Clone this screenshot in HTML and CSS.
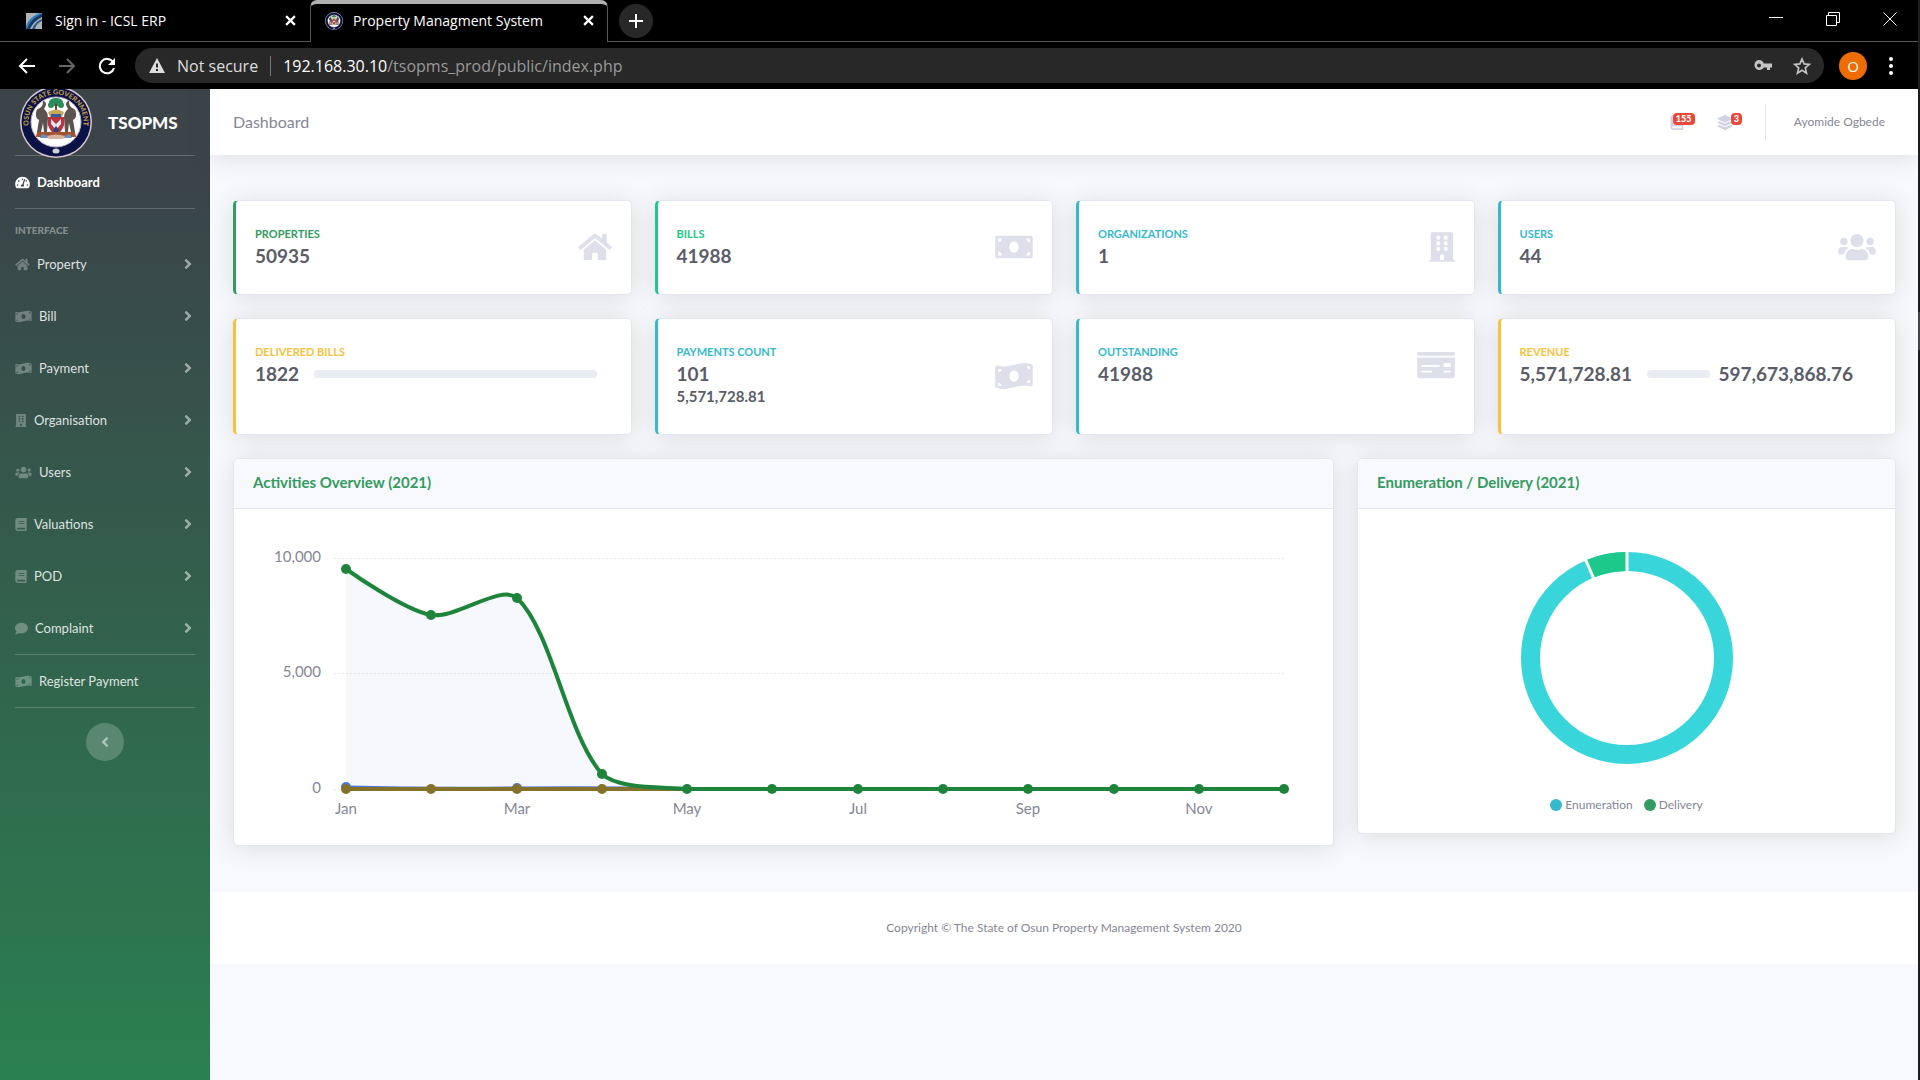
FILE: index.html
```html
<!DOCTYPE html>
<html lang="en">
<head>
  <meta charset="UTF-8">
  <meta name="viewport" content="width=device-width, initial-scale=1.0">
  <title>Property Managment System</title>
  <link rel="stylesheet" href="styles.css">
</head>
<body>
  <!-- Icon set -->
  <svg class="sprite" aria-hidden="true">
    <symbol id="i-home" viewBox="0 0 576 512"><path d="M280.37 148.26L96 300.11V464a16 16 0 0 0 16 16l112.06-.29a16 16 0 0 0 15.92-16V368a16 16 0 0 1 16-16h64a16 16 0 0 1 16 16v95.64a16 16 0 0 0 16 16.05L464 480a16 16 0 0 0 16-16V300L295.67 148.26a12.19 12.19 0 0 0-15.3 0zM571.6 251.47L488 182.56V44.05a12 12 0 0 0-12-12h-56a12 12 0 0 0-12 12v72.61L318.47 43a48 48 0 0 0-61 0L4.34 251.47a12 12 0 0 0-1.6 16.9l25.5 31A12 12 0 0 0 45.15 301l235.22-193.74a12.19 12.19 0 0 1 15.3 0L530.9 301a12 12 0 0 0 16.9-1.6l25.5-31a12 12 0 0 0-1.7-16.93z"/></symbol>
    <symbol id="i-bill" viewBox="0 0 640 512"><path d="M608 64H32C14.33 64 0 78.33 0 96v320c0 17.67 14.33 32 32 32h576c17.67 0 32-14.33 32-32V96c0-17.67-14.33-32-32-32zM48 400v-64c35.35 0 64 28.65 64 64H48zm0-224v-64h64c0 35.35-28.65 64-64 64zm272 176c-44.19 0-80-42.99-80-96 0-53.02 35.82-96 80-96s80 42.98 80 96c0 53.03-35.83 96-80 96zm272 48h-64c0-35.35 28.65-64 64-64v64zm0-224c-35.35 0-64-28.65-64-64h64v64z"/></symbol>
    <symbol id="i-wave" viewBox="0 0 640 512"><path d="M621.16 54.46C582.37 38.19 543.55 32 504.75 32c-123.17-.01-246.33 62.34-369.5 62.34-30.89 0-61.76-3.92-92.65-13.72-3.47-1.1-6.95-1.62-10.35-1.62C15.04 79 0 92.32 0 110.81v317.26c0 12.63 7.23 24.6 18.84 29.46C57.63 473.81 96.45 480 135.25 480c123.17 0 246.34-62.35 369.51-62.35 30.89 0 61.76 3.92 92.65 13.72 3.47 1.1 6.95 1.62 10.35 1.62 17.21 0 32.25-13.32 32.25-31.81V83.93c-.01-12.64-7.24-24.6-18.85-29.47zM48 132.22c20.12 5.04 41.12 7.57 62.72 8.93C104.84 170.54 79 192.69 48 192.69v-60.47zm0 285v-47.78c34.37 0 62.18 27.27 63.71 61.4-22.53-1.81-43.59-6.31-63.71-13.62zM320 352c-44.19 0-80-42.99-80-96 0-53.02 35.82-96 80-96s80 42.98 80 96c0 53.03-35.83 96-80 96zm272 27.78c-17.52-4.39-35.71-6.85-54.32-8.44 5.87-26.08 27.5-45.88 54.32-49.28v57.72zm0-236.11c-30.89-3.91-54.86-29.7-55.81-61.55 19.54 2.17 38.09 6.23 55.81 12.66v48.89z"/></symbol>
    <symbol id="i-building" viewBox="0 0 448 512"><path fill-rule="evenodd" d="M436 480h-20V24c0-13.26-10.74-24-24-24H56C42.75 0 32 10.75 32 24v456H12c-6.63 0-12 5.37-12 12v20h448v-20c0-6.63-5.37-12-12-12zM140 64h40q12 0 12 12v40q0 12-12 12h-40q-12 0-12-12V76q0-12 12-12zM268 64h40q12 0 12 12v40q0 12-12 12h-40q-12 0-12-12V76q0-12 12-12zM140 160h40q12 0 12 12v40q0 12-12 12h-40q-12 0-12-12v-40q0-12 12-12zM268 160h40q12 0 12 12v40q0 12-12 12h-40q-12 0-12-12v-40q0-12 12-12zM140 256h40q12 0 12 12v40q0 12-12 12h-40q-12 0-12-12v-40q0-12 12-12zM268 256h40q12 0 12 12v40q0 12-12 12h-40q-12 0-12-12v-40q0-12 12-12zM204 384h40q12 0 12 12v84h-64v-84q0-12 12-12z"/></symbol>
    <symbol id="i-users" viewBox="0 0 640 512"><path d="M96 224c35.3 0 64-28.7 64-64s-28.7-64-64-64-64 28.7-64 64 28.7 64 64 64zm448 0c35.3 0 64-28.7 64-64s-28.7-64-64-64-64 28.7-64 64 28.7 64 64 64zm32 32h-64c-17.6 0-33.5 7.1-45.1 18.6 40.3 22.1 68.9 62 75.1 109.4h66c17.7 0 32-14.3 32-32v-32c0-35.3-28.7-64-64-64zm-256 0c61.9 0 112-50.1 112-112S381.9 32 320 32 208 82.1 208 144s50.1 112 112 112zm76.8 32h-8.3c-20.8 10-43.9 16-68.5 16s-47.6-6-68.5-16h-8.3C179.6 288 128 339.6 128 403.2V432c0 26.5 21.5 48 48 48h288c26.5 0 48-21.5 48-48v-28.8c0-63.6-51.6-115.2-115.2-115.2zm-223.7-13.4C161.5 263.1 145.6 256 128 256H64c-35.3 0-64 28.7-64 64v32c0 17.7 14.3 32 32 32h65.9c6.3-47.4 34.9-87.3 75.2-109.4z"/></symbol>
    <symbol id="i-check" viewBox="0 0 640 512"><path d="M0 448c0 17.67 14.33 32 32 32h576c17.67 0 32-14.33 32-32V128H0v320zm448-208c0-8.84 7.16-16 16-16h96c8.84 0 16 7.16 16 16v32c0 8.84-7.16 16-16 16h-96c-8.84 0-16-7.16-16-16v-32zm0 120c0-4.42 3.58-8 8-8h112c4.42 0 8 3.58 8 8v16c0 4.42-3.58 8-8 8H456c-4.42 0-8-3.58-8-8v-16zM64 264c0-4.42 3.58-8 8-8h304c4.42 0 8 3.58 8 8v16c0 4.42-3.58 8-8 8H72c-4.42 0-8-3.58-8-8v-16zm0 96c0-4.42 3.58-8 8-8h176c4.42 0 8 3.58 8 8v16c0 4.42-3.58 8-8 8H72c-4.42 0-8-3.58-8-8v-16zM624 32H16C7.16 32 0 39.16 0 48v48h640V48c0-8.84-7.16-16-16-16z"/></symbol>
    <symbol id="i-dash" viewBox="0 0 576 512"><path d="M288 32C128.94 32 0 160.94 0 320c0 52.8 14.25 102.26 39.06 144.8 5.61 9.62 16.3 15.2 27.44 15.2h443c11.14 0 21.83-5.58 27.44-15.2C561.75 422.26 576 372.8 576 320c0-159.06-128.94-288-288-288zm0 64c14.71 0 26.58 10.13 30.32 23.65-1.11 2.26-2.64 4.23-3.45 6.67l-9.22 27.67c-5.13 3.49-10.97 6.01-17.64 6.01-17.67 0-32-14.33-32-32S270.33 96 288 96zM96 384c-17.67 0-32-14.33-32-32s14.33-32 32-32 32 14.33 32 32-14.33 32-32 32zm48-160c-17.67 0-32-14.33-32-32s14.33-32 32-32 32 14.33 32 32-14.33 32-32 32zm246.77-72.41l-61.33 184C343.13 347.33 352 364.54 352 384c0 11.72-3.38 22.55-8.88 32H232.88c-5.5-9.45-8.88-20.28-8.88-32 0-33.94 26.5-61.43 59.9-63.59l61.34-184.01c4.17-12.56 17.73-19.45 30.36-15.17 12.57 4.19 19.35 17.79 15.17 30.36zm14.66 57.2l15.52-46.55c3.47-1.29 7.13-2.23 11.05-2.23 17.67 0 32 14.33 32 32s-14.33 32-32 32c-11.38-.01-20.89-6.28-26.57-15.22zM480 384c-17.67 0-32-14.33-32-32s14.33-32 32-32 32 14.33 32 32-14.33 32-32 32z"/></symbol>
    <symbol id="i-book" viewBox="0 0 448 512"><path d="M448 360V24c0-13.3-10.7-24-24-24H96C43 0 0 43 0 96v320c0 53 43 96 96 96h328c13.3 0 24-10.7 24-24v-16c0-7.5-3.5-14.3-8.9-18.7-4.2-15.4-4.2-59.3 0-74.7 5.4-4.3 8.9-11.1 8.9-18.6zM128 134c0-3.3 2.7-6 6-6h212c3.3 0 6 2.7 6 6v20c0 3.3-2.7 6-6 6H134c-3.3 0-6-2.7-6-6v-20zm0 64c0-3.3 2.7-6 6-6h212c3.3 0 6 2.7 6 6v20c0 3.3-2.7 6-6 6H134c-3.3 0-6-2.7-6-6v-20zm253.4 250H96c-17.7 0-32-14.3-32-32 0-17.6 14.4-32 32-32h285.4c-1.9 17.1-1.9 46.9 0 64z"/></symbol>
    <symbol id="i-comment" viewBox="0 0 512 512"><path d="M256 32C114.6 32 0 125.1 0 240c0 49.6 21.4 95 57 130.7C44.5 421.1 2.7 466 2.2 466.5c-2.2 2.3-2.8 5.7-1.5 8.7S4.8 480 8 480c66.3 0 116-31.8 140.6-51.4 32.7 12.3 69 19.4 107.4 19.4 141.4 0 256-93.1 256-208S397.4 32 256 32z"/></symbol>
    <symbol id="i-layers" viewBox="0 0 512 512"><path d="M12.41 148.02l232.94 105.67c6.8 3.09 14.49 3.09 21.29 0l232.94-105.67c16.55-7.51 16.55-32.52 0-40.03L266.65 2.31a25.607 25.607 0 0 0-21.29 0L12.41 107.98c-16.55 7.51-16.55 32.53 0 40.04zm487.18 88.28l-58.09-26.33-161.64 73.27c-7.56 3.43-15.59 5.17-23.86 5.17s-16.29-1.74-23.86-5.17L70.51 209.97l-58.1 26.33c-16.55 7.5-16.55 32.5 0 40l232.94 105.59c6.8 3.08 14.49 3.08 21.29 0L499.59 276.3c16.55-7.5 16.55-32.5 0-40zm0 127.8l-57.87-26.23-161.86 73.37c-7.56 3.43-15.59 5.17-23.86 5.17s-16.29-1.74-23.86-5.17L70.29 337.87 12.41 364.1c-16.55 7.5-16.55 32.5 0 40l232.94 105.59c6.8 3.08 14.49 3.08 21.29 0L499.59 404.1c16.55-7.5 16.55-32.5 0-40z"/></symbol>
    <symbol id="i-right" viewBox="0 0 256 512"><path d="M224.3 273l-136 136c-9.4 9.4-24.6 9.4-33.9 0l-22.6-22.6c-9.4-9.4-9.4-24.6 0-33.9l96.4-96.4-96.4-96.4c-9.4-9.4-9.4-24.6 0-33.9L54.3 103c9.4-9.4 24.6-9.4 33.9 0l136 136c9.5 9.4 9.5 24.6.1 34z"/></symbol>
    <symbol id="i-left" viewBox="0 0 256 512"><path d="M31.7 239l136-136c9.4-9.4 24.6-9.4 33.9 0l22.6 22.6c9.4 9.4 9.4 24.6 0 33.9L127.9 256l96.4 96.4c9.4 9.4 9.4 24.6 0 33.9L201.7 409c-9.4 9.4-24.6 9.4-33.9 0l-136-136c-9.5-9.4-9.5-24.6-.1-34z"/></symbol>
    <symbol id="i-x" viewBox="0 0 10 10"><path d="M1 1l8 8M9 1L1 9" fill="none" stroke="currentColor" stroke-width="2"/></symbol>
    <symbol id="seal" viewBox="0 0 72 72">
      <circle cx="36" cy="36" r="36" fill="#d9c9cf"/>
      <circle cx="36" cy="36" r="34.5" fill="#0b1346"/>
      <circle cx="36" cy="36" r="25" fill="#fff" stroke="#b9b4c4"/>
      <g fill="#2c8b5a"><ellipse cx="36" cy="16" rx="7" ry="4"/><circle cx="31" cy="19" r="3"/><circle cx="41" cy="19" r="3"/></g>
      <path d="M35 18h2v7h-2z" fill="#5a4a2a"/>
      <path d="M28 26q8-5 16 0l-2 5H30z" fill="#c9a75a"/>
      <path d="M31 28h10v3H31z" fill="#345f96"/>
      <path d="M28 31h16v8q-2 7-8 10-6-3-8-10z" fill="#b8323f"/>
      <path d="M31 33l5 5 5-5v5l-5 6-5-6z" fill="#dfe4ee"/>
      <path d="M33 44l3-4 3 4-3 4z" fill="#27457f"/>
      <g fill="#5c534f">
        <path id="elephant" d="M23 15q3 0 3 4l-2 4q4 3 4 9l-1 14h-3l-1-9-2 9h-4l2-12q-4-2-3-7 0-4 4-5l2-2q1-2 1-5z"/>
        <use href="#elephant" transform="matrix(-1 0 0 1 72 0)"/>
      </g>
      <path d="M17 46h38l1 5H16z" fill="#a4532e"/>
      <path d="M22 48q14 6 28 0l2 4H20z" fill="#6f8fc4"/>
      <path d="M27 50q9-3 18 0l-2 3H29z" fill="#d7b49b"/>
      <ellipse cx="36" cy="65" rx="3.5" ry="2.5" fill="#ccd3d2"/>
    </symbol>
  </svg>

  <div class="window">
    <header class="browser">
      <div class="tab-strip">
        <div class="tab">
          <svg class="favicon" viewBox="0 0 16 16"><path d="M0 0h16v16H0z" fill="#aeb3b8"/><path d="M0 16C2 8 8 3 16 0v4C10 7 6 11 4 16z" fill="#15395f"/><path d="M0 13C3 6 8 2 14 0h2v1C9 4 4 8 1 16H0z" fill="#2f7dc0"/><path d="M6 16C8 11 11 8 16 6v2c-4 2-6 4-7 8z" fill="#2a5f93"/></svg>
          <span class="tab-title">Sign in - ICSL ERP</span>
          <button class="tab-close" aria-label="Close tab"><svg><use href="#i-x"/></svg></button>
        </div>
        <div class="tab active">
          <svg class="favicon"><use href="#seal"/></svg>
          <span class="tab-title">Property Managment System</span>
          <button class="tab-close" aria-label="Close tab"><svg><use href="#i-x"/></svg></button>
        </div>
        <div class="tab-rest">
          <button class="new-tab" aria-label="New tab"><svg viewBox="0 0 14 14"><path d="M7 0v14M0 7h14" stroke="#fff" stroke-width="2"/></svg></button>
          <div class="window-buttons">
            <button aria-label="Minimize"><svg viewBox="0 0 14 14"><path d="M0 5.5h14" stroke="#fff"/></svg></button>
            <button aria-label="Restore"><svg viewBox="0 0 14 14"><path d="M.5 3.5h10v10H.5zM2.500 3.500v-3h11v10h-3" fill="none" stroke="#fff"/></svg></button>
            <button aria-label="Close"><svg viewBox="0 0 14 14"><path d="M.5.5l13 13M13.500.5l-13 13" stroke="#fff"/></svg></button>
          </div>
        </div>
      </div>
      <div class="toolbar">
        <button aria-label="Back"><svg viewBox="0 0 18 18"><path d="M17 9H2M9 2L2 9l7 7" fill="none" stroke="#fff" stroke-width="2"/></svg></button>
        <button aria-label="Forward"><svg viewBox="0 0 18 18"><path d="M1 9h15M9 2l7 7-7 7" fill="none" stroke="#666" stroke-width="2"/></svg></button>
        <button aria-label="Reload"><svg viewBox="0 0 18 18"><path d="M15 5A7.200 7.200 0 1 0 16 11" fill="none" stroke="#fff" stroke-width="2"/><path d="M17 1v7h-7z" fill="#fff"/></svg></button>
        <div class="omnibox">
          <svg class="warn" viewBox="0 0 16 15"><path fill="#ddd" fill-rule="evenodd" d="M8 0l8 15H0zM7 5.500v4h2v-4zM7 11v2h2v-2z"/></svg>
          <span class="not-secure">Not secure</span>
          <span class="url"><b>192.168.30.10</b>/tsopms_prod/public/index.php</span>
          <button aria-label="Saved password"><svg viewBox="0 0 18 12"><path fill="#c4c4c4" fill-rule="evenodd" d="M5 0a5 5 0 0 1 4.800 3.500H18v4h-2V10h-3V7.500H9.800A5 5 0 1 1 5 0zm0 3.500a2 2 0 1 0 0 4 2 2 0 0 0 0-4z"/></svg></button>
          <button aria-label="Bookmark"><svg viewBox="0 0 18 18"><path d="M9 2l2.100 4.900 5.200.5-4 3.500 1.200 5.200L9 13.300l-4.500 2.800 1.200-5.200-4-3.500 5.200-.5z" fill="none" stroke="#c4c4c4" stroke-width="1.700"/></svg></button>
        </div>
        <button class="avatar" aria-label="Profile">O</button>
        <button class="menu" aria-label="Menu"><svg viewBox="0 0 4 18"><g fill="#fff"><circle cx="2" cy="2" r="2"/><circle cx="2" cy="9" r="2"/><circle cx="2" cy="16" r="2"/></g></svg></button>
      </div>
    </header>

    <div class="wrapper">
      <nav class="sidebar">
        <a class="brand" href="#">
          <svg class="brand-logo" viewBox="0 0 72 72">
            <use href="#seal"/>
            <path id="seal-arc" d="M10 45A27.5 27.5 0 1 1 62 45" fill="none"/>
            <text class="seal-text"><textPath href="#seal-arc" startOffset="50%">OSUN STATE GOVERNMENT</textPath></text>
          </svg>
          <span>TSOPMS</span>
        </a>
        <hr>
        <a class="nav-link active" href="#"><svg class="w576"><use href="#i-dash"/></svg>Dashboard</a>
        <hr>
        <div class="sidebar-heading">Interface</div>
        <a class="nav-link" href="#"><svg class="w576"><use href="#i-home"/></svg>Property<svg class="arrow"><use href="#i-right"/></svg></a>
        <a class="nav-link" href="#"><svg class="w640"><use href="#i-wave"/></svg>Bill<svg class="arrow"><use href="#i-right"/></svg></a>
        <a class="nav-link" href="#"><svg class="w640"><use href="#i-wave"/></svg>Payment<svg class="arrow"><use href="#i-right"/></svg></a>
        <a class="nav-link" href="#"><svg class="w448"><use href="#i-building"/></svg>Organisation<svg class="arrow"><use href="#i-right"/></svg></a>
        <a class="nav-link" href="#"><svg class="w640"><use href="#i-users"/></svg>Users<svg class="arrow"><use href="#i-right"/></svg></a>
        <a class="nav-link" href="#"><svg class="w448"><use href="#i-book"/></svg>Valuations<svg class="arrow"><use href="#i-right"/></svg></a>
        <a class="nav-link" href="#"><svg class="w448"><use href="#i-book"/></svg>POD<svg class="arrow"><use href="#i-right"/></svg></a>
        <a class="nav-link" href="#"><svg class="w512"><use href="#i-comment"/></svg>Complaint<svg class="arrow"><use href="#i-right"/></svg></a>
        <hr>
        <a class="nav-link" href="#"><svg class="w640"><use href="#i-wave"/></svg>Register Payment</a>
        <hr>
        <button class="sidebar-toggle" aria-label="Collapse sidebar"><svg><use href="#i-left"/></svg></button>
      </nav>

      <div class="content">
        <div class="topbar">
          <h1>Dashboard</h1>
          <a class="alert-link" href="#" aria-label="Bills"><svg><use href="#i-book"/></svg><span class="badge">155</span></a>
          <a class="alert-link" href="#" aria-label="Layers"><svg><use href="#i-layers"/></svg><span class="badge">3</span></a>
          <a class="user" href="#">Ayomide Ogbede</a>
        </div>

        <main class="container">
          <div class="grid">
            <div class="card stat primary">
              <div class="stat-text"><div class="stat-label">Properties</div><div class="stat-value">50935</div></div>
              <svg class="w576"><use href="#i-home"/></svg>
            </div>
            <div class="card stat success">
              <div class="stat-text"><div class="stat-label">Bills</div><div class="stat-value">41988</div></div>
              <svg class="w640"><use href="#i-bill"/></svg>
            </div>
            <div class="card stat info">
              <div class="stat-text"><div class="stat-label">Organizations</div><div class="stat-value">1</div></div>
              <svg class="w448"><use href="#i-building"/></svg>
            </div>
            <div class="card stat info">
              <div class="stat-text"><div class="stat-label">Users</div><div class="stat-value">44</div></div>
              <svg class="w640"><use href="#i-users"/></svg>
            </div>

            <div class="card stat warning">
              <div class="stat-text"><div class="stat-label">Delivered Bills</div><div class="stat-value with-bar">1822<div class="progress"></div></div></div>
            </div>
            <div class="card stat info">
              <div class="stat-text"><div class="stat-label">Payments Count</div><div class="stat-value">101</div><div class="stat-amount">5,571,728.81</div></div>
              <svg class="w640"><use href="#i-wave"/></svg>
            </div>
            <div class="card stat info">
              <div class="stat-text"><div class="stat-label">Outstanding</div><div class="stat-value">41988</div></div>
              <svg class="w640"><use href="#i-check"/></svg>
            </div>
            <div class="card stat warning">
              <div class="stat-text"><div class="stat-label">Revenue</div><div class="stat-value with-bar">5,571,728.81<div class="progress"></div><span class="target">597,673,868.76</span></div></div>
            </div>

            <div class="card chart-area">
              <h2 class="card-header">Activities Overview (2021)</h2>
              <div class="card-body">
                <svg class="area-svg" viewBox="0 0 1061 298">
                  <g class="grid-lines"><path d="M81 30.500h950M81 145.500h950M81 261.500h950"/></g>
                  <path d="M93 41C93 41 151 82 178 87S248 56 264 70C299 103 314 206 349 246C365 261 408 259 434 261H93z" fill="#4e73df" fill-opacity=".05"/>
                  <path d="M93 259Q178 261 264 260T434 261" fill="none" stroke="#4e73df" stroke-width="3"/>
                  <g fill="#4e73df"><circle cx="93" cy="259" r="5"/><circle cx="264" cy="260" r="5"/></g>
                  <path d="M93 261H434" stroke="#85722a" stroke-width="4"/>
                  <g fill="#85722a"><circle cx="93" cy="261" r="5"/><circle cx="178" cy="261" r="5"/><circle cx="264" cy="261" r="5"/><circle cx="349" cy="261" r="5"/></g>
                  <path d="M93 41C93 41 151 82.400 178 87C202.400 91.200 248.100 55.700 264 70C299.400 103.400 313.600 206.400 349 246C364.600 261 408 258.700 434 261H1031" fill="none" stroke="#1e843c" stroke-width="4"/>
                  <g fill="#1e843c"><circle cx="93" cy="41" r="5"/><circle cx="178" cy="87" r="5"/><circle cx="264" cy="70" r="5"/><circle cx="349" cy="246" r="5"/><circle cx="434" cy="261" r="5"/><circle cx="519" cy="261" r="5"/><circle cx="605" cy="261" r="5"/><circle cx="690" cy="261" r="5"/><circle cx="775" cy="261" r="5"/><circle cx="861" cy="261" r="5"/><circle cx="946" cy="261" r="5"/><circle cx="1031" cy="261" r="5"/></g>
                  <g class="y-labels"><text x="68" y="34">10,000</text><text x="68" y="149">5,000</text><text x="68" y="265">0</text></g>
                  <g class="x-labels"><text x="93" y="286">Jan</text><text x="264" y="286">Mar</text><text x="434" y="286">May</text><text x="605" y="286">Jul</text><text x="775" y="286">Sep</text><text x="946" y="286">Nov</text></g>
                </svg>
              </div>
            </div>

            <div class="card chart-pie">
              <h2 class="card-header">Enumeration / Delivery (2021)</h2>
              <div class="card-body">
                <svg class="donut" viewBox="-106 -106 212 212">
                  <circle r="96.500" fill="none" stroke="#38d6da" stroke-width="19"/>
                  <path d="M-37.400-88.950A96.500 96.500 0 0 1 0-96.500" fill="none" stroke="#1cc88a" stroke-width="19"/>
                  <path d="M0-80V-108M-30.500-73L-43-102" stroke="#fff" stroke-width="3"/>
                </svg>
                <div class="legend">
                  <span class="key info">Enumeration</span>
                  <span class="key primary">Delivery</span>
                </div>
              </div>
            </div>
          </div>
        </main>

        <footer class="footer">Copyright © The State of Osun Property Management System 2020</footer>
      </div>
    </div>
  </div>
  <div class="edge"></div>
</body>
</html>
```
FILE: styles.css
```css
* {
  box-sizing: border-box;
}

body {
  margin: 0;
  display: flex;
  min-height: 100vh;
  background-color: #f8f9fc;
  color: #858796;
  font-family: Lato, sans-serif;
  font-size: 15px;
}

a {
  color: inherit;
  text-decoration: none;
}

button {
  padding: 0;
  border: none;
  background: none;
  color: inherit;
  font-family: inherit;
  cursor: pointer;
}

svg {
  display: block;
  fill: currentColor;
}

.sprite {
  position: absolute;
  width: 0;
  height: 0;
}

.window {
  flex: 1;
  display: flex;
  flex-direction: column;
}

.edge {
  width: 2px;
  background: linear-gradient(#1d1d1d 312px, #454545 312px, #454545 350px, #1d1d1d 350px);
}

/* Browser */
.browser {
  position: relative;
  z-index: 2;
  background-color: #000;
  color: #fff;
  font-family: "Open Sans", sans-serif;
}

.tab-strip {
  display: flex;
  height: 42px;
}

.tab {
  display: flex;
  align-items: center;
  width: 310px;
  padding: 0 14px 0 26px;
  border-bottom: 1px solid #555;
  font-size: 14px;
}

.tab.active {
  width: 298px;
  padding: 0 13px 5px 14px;
  border: 1px solid #555;
  border-top: 4px solid #b0b0b0;
  border-bottom: none;
  border-radius: 7px 7px 0 0;
}

.favicon {
  width: 16px;
  height: 16px;
  margin-right: 13px;
}

.tab.active .favicon {
  width: 18px;
  height: 20px;
  margin-right: 10px;
}

.tab-title {
  flex: 1;
  white-space: nowrap;
}

.tab-close svg {
  width: 11px;
  height: 11px;
}

.tab-rest {
  flex: 1;
  display: flex;
  align-items: center;
  justify-content: space-between;
  padding: 0 21px 0 11px;
  border-bottom: 1px solid #555;
}

.new-tab {
  display: grid;
  place-items: center;
  width: 34px;
  height: 34px;
  border-radius: 50%;
  background-color: #282828;
}

.new-tab svg,
.window-buttons svg {
  width: 14px;
  height: 14px;
}

.window-buttons {
  display: flex;
  gap: 43px;
  padding-bottom: 4px;
}

.toolbar {
  display: flex;
  align-items: center;
  gap: 22px;
  height: 47px;
  padding: 0 25px 0 18px;
}

.toolbar > button svg {
  width: 18px;
  height: 18px;
}

.toolbar .omnibox {
  flex: 1;
  display: flex;
  align-items: center;
  height: 35px;
  margin-right: -7px;
  margin-left: -3px;
  padding: 0 13px 0 14px;
  border-radius: 18px;
  background-color: #282828;
  font-size: 16px;
}

.warn {
  width: 16px;
  height: 15px;
  margin-right: 12px;
}

.not-secure {
  padding-right: 12px;
  border-right: 1px solid #777;
  color: #ddd;
  line-height: 20px;
}

.url {
  flex: 1;
  padding-left: 12px;
  color: #9a9a9a;
}

.url b {
  color: #fff;
  font-weight: normal;
}

.omnibox button {
  margin-left: 21px;
}

.omnibox svg {
  width: 18px;
}

.omnibox .warn {
  width: 16px;
}

.avatar {
  width: 28px;
  height: 28px;
  border-radius: 50%;
  background-color: #ef6c00;
  font-size: 15px;
}

.toolbar .menu svg {
  width: 4px;
  height: 18px;
}

/* Layout */
.wrapper {
  flex: 1;
  display: flex;
}

.content {
  flex: 1;
  min-width: 0;
}

/* Sidebar */
.sidebar {
  width: 210px;
  background: linear-gradient(#3a4449 10%, #2a8050 100%);
  color: rgba(255, 255, 255, .85);
}

.sidebar hr {
  height: 1px;
  margin: 0 15px;
  border: none;
  background-color: rgba(255, 255, 255, .2);
}

.brand {
  display: flex;
  align-items: center;
  gap: 16px;
  height: 66px;
  padding-left: 20px;
  color: #fff;
  font-size: 17px;
  font-weight: 900;
}

.brand-logo {
  position: relative;
  width: 72px;
  height: 72px;
}

.seal-text {
  fill: #c09a45;
  font-size: 7px;
  font-weight: 900;
  text-anchor: middle;
}

.nav-link {
  display: flex;
  align-items: center;
  height: 52px;
  padding: 0 18px 0 15px;
  font-size: 13px;
}

.nav-link svg {
  height: 13px;
  margin-right: 7px;
  opacity: .35;
}

.nav-link.active {
  color: #fff;
  font-weight: bold;
}

.nav-link.active svg {
  opacity: 1;
}

.w448 {
  width: 12px;
}

.w512 {
  width: 13px;
}

.w576 {
  width: 15px;
}

.w640 {
  width: 17px;
}

.nav-link .arrow {
  width: 8px;
  height: 16px;
  margin: 0 0 0 auto;
  opacity: .6;
}

.sidebar-heading {
  padding: 14px 15px 0;
  height: 29px;
  color: rgba(255, 255, 255, .4);
  font-size: 10px;
  font-weight: 900;
  line-height: 14px;
  text-transform: uppercase;
}

.sidebar-toggle {
  display: grid;
  place-items: center;
  width: 38px;
  height: 38px;
  margin: 15px auto;
  border-radius: 50%;
  background-color: rgba(255, 255, 255, .2);
  color: rgba(255, 255, 255, .5);
}

.sidebar-toggle svg {
  width: 8px;
  height: 16px;
}

/* Topbar */
.topbar {
  display: flex;
  align-items: center;
  height: 66px;
  padding: 0 33px 0 23px;
  background-color: #fff;
  box-shadow: 0 2px 26px rgba(58, 59, 69, .15);
}

.topbar h1 {
  flex: 1;
  margin: 0;
  padding-bottom: 2px;
  font-size: 16px;
  font-weight: normal;
}

.alert-link {
  position: relative;
  margin-right: 32px;
  color: #d1d3e2;
}

.alert-link svg {
  width: 16px;
  height: 15px;
}

.badge {
  position: absolute;
  top: -2px;
  left: 4px;
  padding: 0 3px;
  border-radius: 4px;
  background-color: #e74a3b;
  color: #fff;
  font-size: 9px;
  font-weight: 900;
  line-height: 12px;
}

.alert-link + .alert-link .badge {
  left: 14px;
}

.user {
  padding-left: 28px;
  border-left: 1px solid #e3e6f0;
  font-size: 12px;
  line-height: 36px;
}

/* Cards */
.container {
  padding: 45px 22px 46px 23px;
}

.grid {
  display: grid;
  grid-template-columns: repeat(12, 1fr);
  gap: 23px;
  align-items: start;
}

.card {
  border: 1px solid #e3e6f0;
  border-radius: 5px;
  background-color: #fff;
  box-shadow: 0 2px 26px rgba(58, 59, 69, .15);
}

.primary { --accent: #339b60; }
.success { --accent: #1cc88a; }
.info { --accent: #36b9cc; }
.warning { --accent: #f6c23e; }

.stat {
  grid-column: span 3;
  align-self: stretch;
  display: flex;
  align-items: center;
  align-content: flex-start;
  flex-wrap: wrap;
  padding: 25px 19px 27px;
  border-left: 3px solid var(--accent);
}

.stat > svg {
  height: 30px;
  color: #dddfeb;
}

.stat > .w448 {
  width: 26px;
}

.stat > .w576 {
  width: 34px;
}

.stat > .w640 {
  width: 38px;
}

.stat-text {
  flex: 1;
}

.stat-label {
  margin-bottom: 3px;
  color: var(--accent);
  font-size: 11px;
  font-weight: bold;
  line-height: 16px;
  text-transform: uppercase;
}

.stat-value {
  color: #5a5c69;
  font-size: 19px;
  font-weight: bold;
  line-height: 22px;
}

.stat-amount {
  color: #5a5c69;
  font-size: 15px;
  font-weight: bold;
  line-height: 22px;
}

.with-bar {
  display: flex;
  align-items: center;
  padding-right: 15px;
}

.progress {
  flex: 1;
  height: 8px;
  margin-left: 15px;
  border-radius: 5px;
  background-color: #eaecf4;
}

.target {
  margin: 0 8px;
}

/* Charts */
.chart-area {
  grid-column: span 8;
}

.chart-pie {
  grid-column: span 4;
}

.card-header {
  margin: 0;
  padding: 13px 19px 15px;
  border-bottom: 1px solid #e3e6f0;
  border-radius: 5px 5px 0 0;
  background-color: #f8f9fc;
  color: #339b60;
  font-size: 15px;
  line-height: 21px;
}

.card-body {
  padding: 19px;
}

.area-svg {
  width: 100%;
  font-size: 15px;
}

.grid-lines {
  fill: none;
  stroke: #e6e7ee;
  stroke-dasharray: 2 2;
}

.y-labels {
  text-anchor: end;
}

.x-labels {
  text-anchor: middle;
}

.donut {
  width: 212px;
  margin: 24px auto 32px;
}

.legend {
  display: flex;
  justify-content: center;
  gap: 11px;
  font-size: 12px;
  line-height: 18px;
}

.key {
  display: flex;
  align-items: center;
  gap: 3px;
}

.key::before {
  content: "";
  width: 12px;
  height: 12px;
  border-radius: 50%;
  background-color: var(--accent);
}

.footer {
  padding: 29px;
  background-color: #fff;
  font-size: 12px;
  line-height: 14px;
  text-align: center;
}
```
